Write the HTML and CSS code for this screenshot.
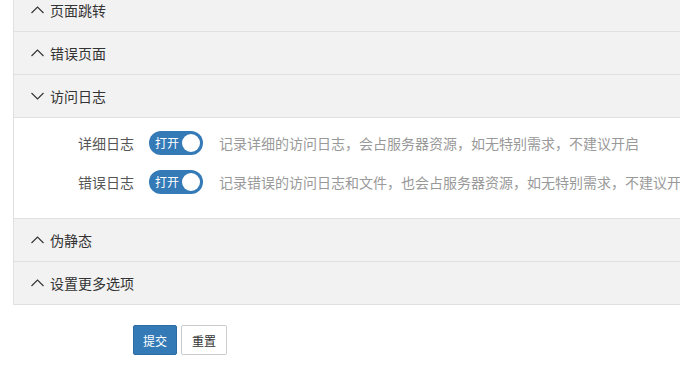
FILE: index.html
```html
<!DOCTYPE html>
<html lang="zh-CN">
<head>
    <meta charset="UTF-8">
    <meta name="viewport" content="width=device-width, initial-scale=1.0">
    <title>站点设置</title>
    <link rel="stylesheet" href="styles.css">
</head>
<body>

    <div class="page">
        <div class="panel">
            <div class="panel-head">
                <svg class="arrow" width="13" height="8" viewBox="0 0 13 8"><path d="M0.5 7 L6.5 1 L12.5 7" /></svg>
                <span>页面跳转</span>
            </div>
            <div class="panel-head">
                <svg class="arrow" width="13" height="8" viewBox="0 0 13 8"><path d="M0.5 7 L6.5 1 L12.5 7" /></svg>
                <span>错误页面</span>
            </div>
            <div class="panel-head">
                <svg class="arrow" width="13" height="8" viewBox="0 0 13 8"><path d="M0.5 1 L6.5 7 L12.5 1" /></svg>
                <span>访问日志</span>
            </div>
            <div class="panel-body">
                <div class="form-row">
                    <label class="form-label">详细日志</label>
                    <div class="switch on"><span class="switch-text">打开</span><i class="knob"></i></div>
                    <span class="form-tip">记录详细的访问日志，会占服务器资源，如无特别需求，不建议开启</span>
                </div>
                <div class="form-row">
                    <label class="form-label">错误日志</label>
                    <div class="switch on"><span class="switch-text">打开</span><i class="knob"></i></div>
                    <span class="form-tip">记录错误的访问日志和文件，也会占服务器资源，如无特别需求，不建议开启</span>
                </div>
            </div>
            <div class="panel-head">
                <svg class="arrow" width="13" height="8" viewBox="0 0 13 8"><path d="M0.5 7 L6.5 1 L12.5 7" /></svg>
                <span>伪静态</span>
            </div>
            <div class="panel-head last">
                <svg class="arrow" width="13" height="8" viewBox="0 0 13 8"><path d="M0.5 7 L6.5 1 L12.5 7" /></svg>
                <span>设置更多选项</span>
            </div>
        </div>

        <div class="actions">
            <button class="btn btn-primary">提交</button>
            <button class="btn btn-default">重置</button>
        </div>
    </div>

</body>
</html>
```

FILE: styles.css
```css
* {
    margin: 0;
    padding: 0;
    box-sizing: border-box;
    font-family: "Noto Sans CJK SC", "Liberation Sans", sans-serif;
}

body {
    background: #fff;
    overflow: hidden;
    color: #333;
}

.page {
    margin-top: -11px;
    padding-left: 13px;
}

.panel {
    width: 720px;
    border: 1px solid #e0e0e0;
    border-top: none;
}

.panel-head {
    display: flex;
    align-items: center;
    height: 43px;
    padding-left: 17px;
    background: #f2f2f2;
    border-bottom: 1px solid #e0e0e0;
    font-size: 14px;
    color: #333;
}

.panel-head.last {
    height: 42px;
    border-bottom: none;
}

.arrow {
    margin-right: 6px;
    fill: none;
    stroke: #333;
    stroke-width: 1.1;
}

.panel-body {
    padding: 13px 0 24px;
    border-bottom: 1px solid #e0e0e0;
}

.form-row {
    display: flex;
    align-items: center;
    height: 24px;
    margin-bottom: 15px;
}

.form-row:last-child {
    margin-bottom: 0;
}

.form-label {
    width: 120px;
    text-align: right;
    font-size: 14px;
    color: #555;
    margin-right: 15px;
}

.switch {
    display: flex;
    align-items: center;
    justify-content: space-between;
    width: 54px;
    height: 24px;
    border-radius: 12px;
    background: #337ab7;
    padding: 0 3px 0 6px;
    margin-right: 16px;
}

.switch-text {
    color: #fff;
    font-size: 12px;
    line-height: 24px;
}

.knob {
    width: 18px;
    height: 18px;
    border-radius: 50%;
    background: #fff;
}

.form-tip {
    font-size: 14px;
    color: #999;
    white-space: nowrap;
}

.actions {
    display: flex;
    gap: 4px;
    margin-top: 20px;
    padding-left: 120px;
}

.btn {
    height: 30px;
    padding: 0 9px;
    font-size: 12px;
    border-radius: 2px;
    cursor: pointer;
}

.btn-primary {
    background: #337ab7;
    border: 1px solid #2e6da4;
    color: #fff;
}

.btn-default {
    background: #fff;
    border: 1px solid #ccc;
    color: #333;
    padding: 0 10px;
}
```
